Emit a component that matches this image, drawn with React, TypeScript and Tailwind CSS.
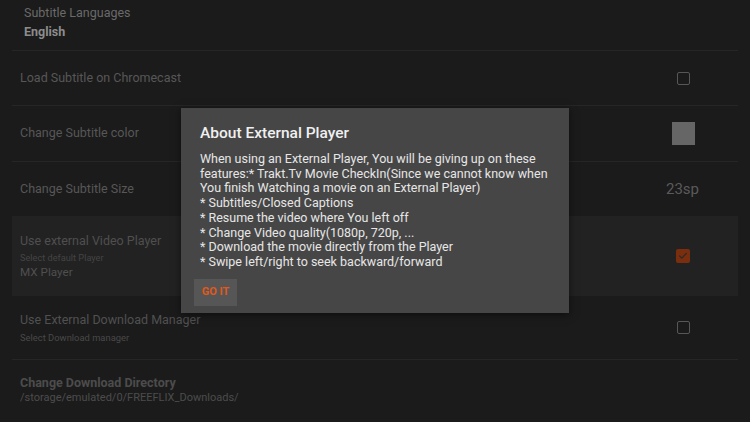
import { Check } from 'lucide-react';

function Divider() {
  return <div className="mx-3 h-px bg-[#262626]" />;
}

function EmptyBox() {
  return <div className="h-[13px] w-[13px] rounded-[2px] border-[1.5px] border-[#575757]" />;
}

export default function App() {
  return (
    <div
      className="relative h-[422px] w-[750px] overflow-hidden bg-[#1b1b1b]"
      style={{ fontFamily: 'Roboto, "Liberation Sans", sans-serif' }}
    >
      {/* settings list (dimmed behind the dialog) */}
      <div className="flex h-[50px] flex-col justify-center pl-6 pb-1">
        <p className="text-[12.5px] leading-[18px] text-[#6a6a6a]">Subtitle Languages</p>
        <p className="text-[12.5px] font-bold leading-[20px] text-[#8c8c8c]">English</p>
      </div>
      <Divider />
      <div className="flex h-[54px] items-center justify-between pl-5 pr-[60px]">
        <p className="text-[12.5px] text-[#575757]">Load Subtitle on Chromecast</p>
        <EmptyBox />
      </div>
      <Divider />
      <div className="flex h-[55px] items-center justify-between pl-5 pr-[55px]">
        <p className="text-[12.5px] text-[#575757]">Change Subtitle color</p>
        <div className="h-[23px] w-[23px] bg-[#666666]" />
      </div>
      <Divider />
      <div className="flex h-[54px] items-center justify-between pl-5 pr-[51px]">
        <p className="text-[12.5px] text-[#575757]">Change Subtitle Size</p>
        <p className="text-[15px] text-[#5a5a5a]">23sp</p>
      </div>
      <div className="mx-3 flex h-[80px] items-center justify-between bg-[#222222] pl-2 pr-[48px]">
        <div className="flex flex-col">
          <p className="text-[12.5px] leading-[18px] text-[#4f4f4f]">Use external Video Player</p>
          <p className="mt-[2px] text-[9.2px] leading-[12px] text-[#444444]">Select default Player</p>
          <p className="text-[11.7px] leading-[16px] text-[#4f4f4f]">MX Player</p>
        </div>
        <div className="flex h-[14px] w-[14px] items-center justify-center rounded-[2px] bg-[#7a2e0e]">
          <Check className="h-[10px] w-[10px] text-[#2a2a2a]" strokeWidth={3} />
        </div>
      </div>
      <div className="flex h-[63px] items-center justify-between pl-5 pr-[60px]">
        <div className="flex flex-col">
          <p className="text-[12.5px] leading-[18px] text-[#505050]">Use External Download Manager</p>
          <p className="mt-[3px] text-[9.4px] leading-[12px] text-[#494949]">Select Download manager</p>
        </div>
        <EmptyBox />
      </div>
      <Divider />
      <div className="flex h-[62px] flex-col justify-center pl-5 pb-1">
        <p className="text-[12.5px] font-bold leading-[17px] text-[#4c4c4c]">Change Download Directory</p>
        <p className="text-[11px] leading-[14px] text-[#4c4c4c]">/storage/emulated/0/FREEFLIX_Downloads/</p>
      </div>

      {/* dialog */}
      <div className="absolute left-[181px] top-[108px] flex h-[205px] w-[388px] flex-col bg-[#464646] px-[19px] pt-[15px] shadow-[0_2px_8px_rgba(0,0,0,0.5)]">
        <p className="text-[15.5px] font-medium leading-[20px] text-[#f0f0f0]">About External Player</p>
        <p className="mt-[9px] whitespace-pre-line text-[12.5px] leading-[14.7px] text-[#e6e6e6]">
          {`When using an External Player, You will be giving up on these
features:* Trakt.Tv Movie CheckIn(Since we cannot know when
You finish Watching a movie on an External Player)
* Subtitles/Closed Captions
* Resume the video where You left off
* Change Video quality(1080p, 720p, ...
* Download the movie directly from the Player
* Swipe left/right to seek backward/forward`}
        </p>
        <button
          type="button"
          className="-ml-[6px] mt-[9px] flex h-[27px] w-[43px] items-center justify-center bg-[#565656] text-[11px] font-bold text-[#e0591c]"
        >
          GO IT
        </button>
      </div>
    </div>
  );
}
